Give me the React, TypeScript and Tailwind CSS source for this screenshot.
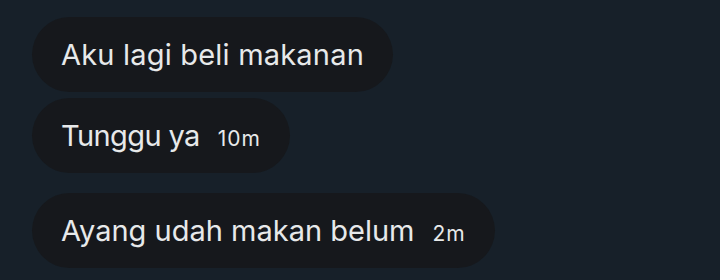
const messages = [
  { text: "Aku lagi beli makanan", time: null, gap: "mt-0", track: "tracking-[0.2px]" },
  { text: "Tunggu ya", time: "10m", gap: "mt-[6px]", track: "tracking-[-0.6px]" },
  { text: "Ayang udah makan belum", time: "2m", gap: "mt-[20px]", track: "tracking-[0px]" },
];

export default function App() {
  return (
    <div className="h-[280px] w-[720px] overflow-hidden bg-[#172029] px-8 pt-[17px] font-['Inter',sans-serif]">
      <div className="flex flex-col items-start">
        {messages.map((m) => (
          <div
            key={m.text}
            className={`${m.gap} flex h-[75px] items-center rounded-full bg-[#16181c] px-[29px] text-[#e7e9ea]`}
          >
            <span className={`${m.track} text-[29px] leading-none`}>{m.text}</span>
            {m.time && (
              <span className="ml-[18px] mt-[6px] text-[21px] leading-none tracking-[1px]">{m.time}</span>
            )}
          </div>
        ))}
      </div>
    </div>
  );
}
